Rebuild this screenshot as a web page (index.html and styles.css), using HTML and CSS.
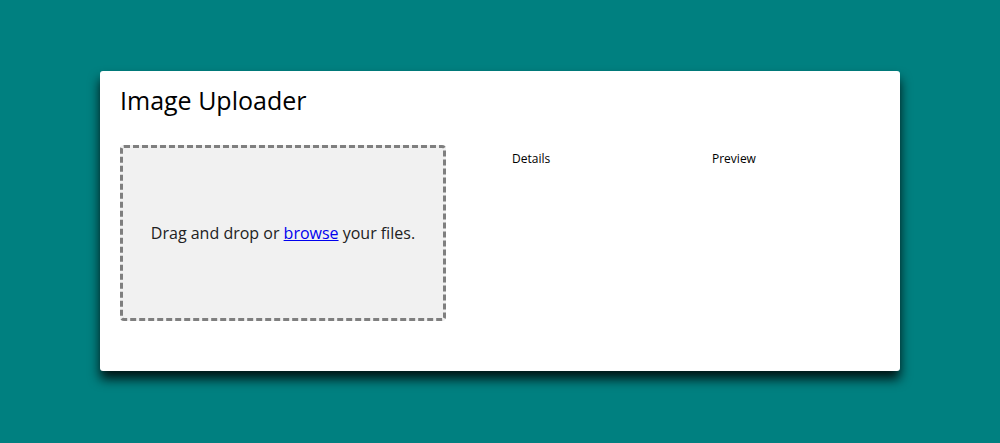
FILE: index.html
```html
<!DOCTYPE html>
<html>
<head>
<meta charset="utf-8">
<link rel="stylesheet" href="styles.css">
</head>
<body>
<div class="card">
  <h2 class="title">Image Uploader</h2>
  <div class="row">
    <div class="drop">
      <p class="drop-text">Drag and drop or <a href="#" class="browse">browse</a> your files.</p>
    </div>
    <div class="col col-details">
      <h4 class="col-title">Details</h4>
    </div>
    <div class="col col-preview">
      <h4 class="col-title">Preview</h4>
    </div>
  </div>
</div>
</body>
</html>
```
FILE: styles.css
```css
html, body {
  margin: 0;
  padding: 0;
}
body {
  background: #008080;
  font-family: "Open Sans", "Liberation Sans", sans-serif;
  width: 1000px;
  height: 443px;
  overflow: hidden;
}
.card {
  box-sizing: border-box;
  width: 800px;
  height: 300px;
  margin: 71px 0 0 100px;
  background: #fff;
  border-radius: 3px;
  box-shadow: 0 8px 12px rgba(0, 0, 0, 0.85);
  padding: 13px 20px 0 20px;
}
.title {
  margin: 0;
  font-size: 25px;
  font-weight: 500;
  line-height: 32px;
  color: #000;
}
.row {
  display: flex;
  margin-top: 29px;
}
.drop {
  box-sizing: border-box;
  flex: 0 0 326px;
  height: 176px;
  background: #f1f1f1;
  border: 3px dashed #7f7f7f;
  border-radius: 4px;
  display: flex;
  align-items: center;
  justify-content: center;
}
.drop-text {
  margin: 0;
  font-size: 16px;
  color: #222;
}
.browse {
  color: #0000ee;
}
.col-details {
  flex: 0 0 200px;
  margin-left: 66px;
}
.col-preview {
  flex: 1 1 auto;
}
.col-title {
  margin: 6px 0 0 0;
  font-size: 12px;
  font-weight: 500;
  line-height: 16px;
  color: #000;
}
```
